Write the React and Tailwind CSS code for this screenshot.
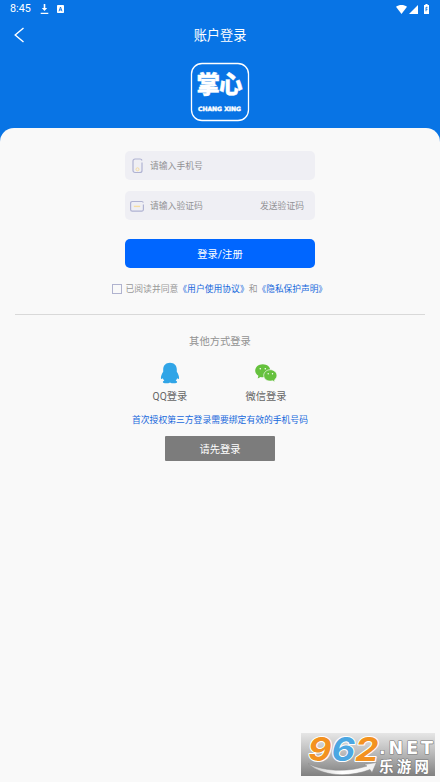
function StatusBar() {
  return (
    <div className="flex h-[18px] items-center pl-[10px] pr-[10px] text-white">
      <span className="w-[21px] pt-px font-[Roboto] text-[10.8px] leading-none">8:45</span>
      <svg className="ml-[9px] h-[10px] w-[9px]" viewBox="0 0 9 10" fill="currentColor">
        <path d="M3.7 0h1.6v4h1.9L4.5 7 1.8 4h1.9zM.7 8.800h7.600V10H.7z" />
      </svg>
      <svg className="ml-[8px] h-[8px] w-[7px]" viewBox="0 0 7 8">
        <rect width="7" height="8" rx=".8" fill="#fff" />
        <path d="M2 6.300 3.500 2 5 6.300M2.500 4.900h2" fill="none" stroke="#0874e5" strokeWidth=".9" />
      </svg>
      <svg className="ml-auto h-[9px] w-[11px]" viewBox="0 0 11 9" fill="currentColor">
        <path d="M0 1.800C3-.5 8-.5 11 1.800L5.500 9z" />
      </svg>
      <svg className="ml-[2px] h-[9px] w-[9px]" viewBox="0 0 9 9" fill="currentColor">
        <path d="M9 0v9H0z" />
      </svg>
      <svg className="ml-[6px] mr-px h-[10px] w-[5px]" viewBox="0 0 5 10">
        <path d="M1.400 0h2.200v1H5v9H0V1h1.400z" fill="#fff" />
        <path d="M3.500 3.300H2v4M2 5.300h1.500" fill="none" stroke="#0874e5" strokeWidth=".9" />
      </svg>
    </div>
  )
}

function AppLogo() {
  return (
    <svg className="mx-auto mt-[10px] block h-[60px] w-[60px]" viewBox="0 0 60 60">
      <rect x="1.500" y="1.500" width="57" height="57" rx="10.500" fill="none" stroke="#fff" strokeWidth="1.300" />
      <g fill="#fff" stroke="#fff" fontWeight="900">
        <text x="6.500" y="30.500" fontSize="23.500" textLength="46" strokeWidth=".4" fontFamily="'Noto Sans CJK SC', sans-serif">掌心</text>
        <text x="8" y="48.500" fontSize="5.800" strokeWidth=".4" textLength="43" lengthAdjust="spacingAndGlyphs" fontFamily="'DejaVu Sans', sans-serif">CHANG XING</text>
      </g>
    </svg>
  )
}

function PhoneIcon() {
  return (
    <svg className="h-[16px] w-[14px]" viewBox="0 0 14 16" fill="none">
      <path d="M12 4.500v8a2 2 0 0 1-2 2H5a2 2 0 0 1-2-2V3a2 2 0 0 1 2-2h5a2 2 0 0 1 2 1.500" stroke="#b0b3d2" strokeWidth="1.200" />
      <circle cx="7.500" cy="11.300" r="1.500" stroke="#f6dda0" />
    </svg>
  )
}

function CodeIcon() {
  return (
    <svg className="h-[16px] w-[14px]" viewBox="0 0 14 16" fill="none">
      <path d="M13.400 6.500v5a1.600 1.600 0 0 1-1.600 1.600H2.200a1.600 1.600 0 0 1-1.600-1.600V5.100a1.600 1.600 0 0 1 1.600-1.600h9.600a1.600 1.600 0 0 1 1.500 1.200" stroke="#b0b3d2" strokeWidth="1.200" />
      <path d="M3.800 8.400h6.400" stroke="#f6dda0" strokeWidth="1.400" />
    </svg>
  )
}

function Field({ icon, placeholder, action }) {
  return (
    <div className="flex h-[29px] w-[190px] items-center rounded-[5px] bg-[#efeff4] pl-[5px] pr-[11px] text-[8.8px] text-[#929294]">
      {icon}
      <span className="ml-[6px] pt-[2px]">{placeholder}</span>
      {action && <span className="ml-auto pt-[2px]">{action}</span>}
    </div>
  )
}

function QQIcon() {
  return (
    <svg className="h-[22px] w-[20px]" viewBox="0 0 20 22" fill="#31a5e7">
      <path d="M10 .8c4.200 0 6.800 2.800 6.800 6.600v2.400c1.400 2 2.300 4.300 2.300 6.100 0 1.300-.8 1.400-1.900.3-.3.900-.8 1.700-1.500 2.400 1 .5 1.600 1 1.400 1.700-.4 1.300-5 1.300-7.100.1-2.100 1.200-6.700 1.200-7.100-.1-.2-.7.4-1.200 1.400-1.700-.7-.7-1.200-1.500-1.500-2.400-1.100 1.100-1.900 1-1.900-.3 0-1.800.9-4.100 2.300-6.100V7.400C3.200 3.600 5.800.8 10 .8z" />
    </svg>
  )
}

function WechatIcon() {
  return (
    <svg className="h-[22px] w-[22px]" viewBox="0 0 22 22">
      <path d="M7.800 2.200c4.300 0 7.600 2.800 7.600 6.500s-3.300 6.500-7.600 6.500c-.8 0-1.500-.1-2.200-.3L2.700 16.500l.7-2.800C1.500 12.600.2 10.800.2 8.700c0-3.700 3.300-6.500 7.600-6.500z" fill="#65c13d" />
      <path d="M15.300 7.700c3.700 0 6.600 2.600 6.600 5.800 0 1.800-.9 3.300-2.400 4.400l.5 2.100-2.400-1.200c-.7.2-1.500.3-2.300.3-3.700 0-6.600-2.500-6.600-5.600s2.900-5.800 6.600-5.800z" fill="#65c13d" stroke="#f9f9f9" strokeWidth=".7" />
      <g fill="#fff">
        <circle cx="5.300" cy="6.800" r=".8" />
        <circle cx="10.300" cy="6.800" r=".8" />
        <circle cx="13.200" cy="11.700" r=".7" />
        <circle cx="17.500" cy="11.700" r=".7" />
      </g>
    </svg>
  )
}

function SocialLogin({ icon, label }) {
  return (
    <div className="flex w-[96px] flex-col items-center text-[10.3px] leading-[16px] text-[#666]">
      {icon}
      <span className="mt-[5px]">{label}</span>
    </div>
  )
}

function SiteMark() {
  return (
    <svg className="absolute bottom-[6px] right-[4px] h-[43px] w-[135px] overflow-visible" viewBox="0 0 135 43">
      <defs>
        <linearGradient id="plate" x1="0" y1="0" x2="0" y2="1">
          <stop offset="0" stopColor="#e6e6e6" />
          <stop offset=".45" stopColor="#bcbcbc" />
          <stop offset="1" stopColor="#808080" />
        </linearGradient>
        <linearGradient id="swoosh" x1="0" y1="0" x2="1" y2="0">
          <stop offset="0" stopColor="#c8c8c8" />
          <stop offset=".5" stopColor="#fff" />
          <stop offset="1" stopColor="#eee" />
        </linearGradient>
      </defs>
      <rect width="134" height="43" fill="url(#plate)" />
      <path d="M7 30.500c15 8 40 9 59 2.500l-3-1.500 12.500-2-4.500 10-2-3C47 45 20 43 7 30.500z" fill="url(#swoosh)" stroke="#888" strokeWidth=".5" />
      <g paintOrder="stroke" strokeLinejoin="round">
        <g fontFamily="Inter, sans-serif" fontWeight="700" fontSize="33" fontStyle="italic" stroke="#fff" strokeWidth="2">
          <text x="7" y="28" fill="#f39220" textLength="23.500" lengthAdjust="spacingAndGlyphs">9</text>
          <text x="30.500" y="28" fill="#4ba7e2" textLength="23.500" lengthAdjust="spacingAndGlyphs">6</text>
          <text x="54" y="28" fill="#f39220" textLength="23.500" lengthAdjust="spacingAndGlyphs">2</text>
        </g>
        <text x="78" y="21" fontSize="17.500" fontWeight="700" fontFamily="'DejaVu Sans', sans-serif" fill="#fff" stroke="#777" strokeWidth="1.200" textLength="54">.NET</text>
        <text x="78" y="39" fontSize="14.500" fontWeight="700" fontFamily="'Noto Sans CJK SC', sans-serif" fill="#fff" stroke="#777" strokeWidth="1.200" textLength="50">乐游网</text>
      </g>
    </svg>
  )
}

export default function App() {
  return (
    <div className="relative flex h-[782px] w-[440px] flex-col overflow-hidden bg-[#0874e5] font-['Roboto','Noto_Sans_CJK_SC',sans-serif]">
      <StatusBar />
      <header className="grid h-[34px] grid-cols-[40px_1fr_40px] items-center text-white">
        <svg className="ml-[14px] h-[16px] w-[11px]" viewBox="0 0 11 16" fill="none" stroke="currentColor" strokeWidth="1.400">
          <path d="M9.500 1 1.200 8l8.300 7" />
        </svg>
        <h1 className="pt-px text-center text-[13.2px] leading-none">账户登录</h1>
      </header>
      <AppLogo />
      <main className="mt-[6px] flex flex-1 flex-col items-center rounded-t-[14px] bg-[#f9f9f9] pt-[23px]">
        <Field icon={<PhoneIcon />} placeholder="请输入手机号" />
        <div className="h-[11px]" />
        <Field icon={<CodeIcon />} placeholder="请输入验证码" action="发送验证码" />
        <button className="mt-[19px] h-[29px] w-[190px] rounded-[5px] bg-[#0066ff] pt-[2px] text-[10.3px] text-white">登录/注册</button>
        <div className="mt-[14px] flex h-[14px] w-[217px] items-center whitespace-nowrap text-[8.8px] text-[#999]">
          <span className="mr-[4px] h-[10px] w-[10px] shrink-0 border border-[#b0b3cf]" />
          <span className="pt-[2px]">已阅读并同意</span>
          <span className="pt-[2px] text-[#1768dc]">《用户使用协议》</span>
          <span className="pt-[2px]">和</span>
          <span className="pt-[2px] text-[8.7px] text-[#1768dc]">《隐私保护声明》</span>
        </div>
        <div className="mt-[18px] h-px w-[410px] bg-[#d9d9d9]" />
        <p className="mt-[19px] text-[10.3px] leading-[16px] text-[#929292]">其他方式登录</p>
        <div className="mt-[12px] flex pr-[4px]">
          <SocialLogin icon={<QQIcon />} label="QQ登录" />
          <SocialLogin icon={<WechatIcon />} label="微信登录" />
        </div>
        <p className="mt-[8px] text-[8.8px] leading-[14px] text-[#1768dc]">首次授权第三方登录需要绑定有效的手机号码</p>
        <div className="mt-[9px] flex h-[25px] w-[110px] items-center justify-center rounded-[1px] bg-[#7c7c7c] pt-[2px] text-[10.3px] text-white">请先登录</div>
      </main>
      <SiteMark />
    </div>
  )
}
